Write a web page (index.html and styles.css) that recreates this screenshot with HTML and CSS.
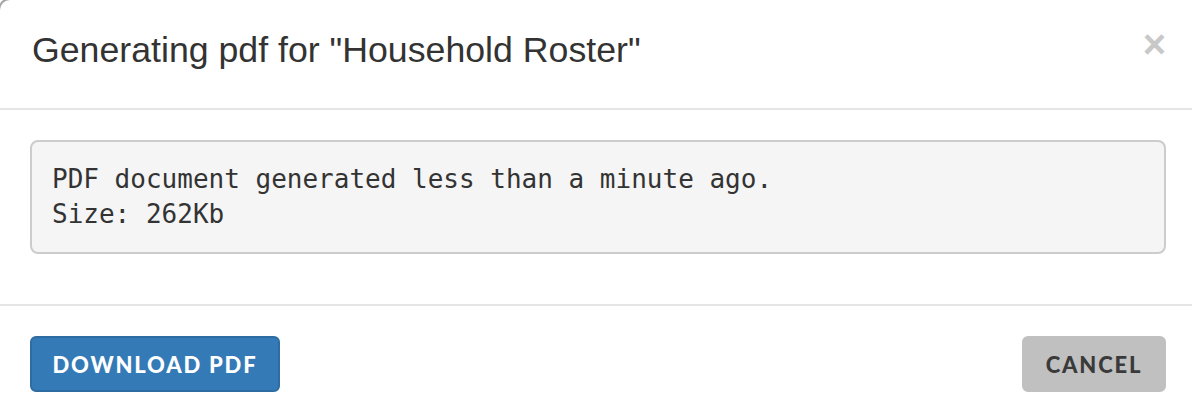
FILE: index.html
```html
<!DOCTYPE html>
<html>
<head>
<meta charset="utf-8">
<link rel="stylesheet" href="styles.css">
</head>
<body>
<div class="modal">
  <div class="modal-header">
    <h4 class="modal-title">Generating pdf for "Household Roster"</h4>
    <button class="close" type="button">×</button>
  </div>
  <div class="modal-body">
    <pre class="info">PDF document generated less than a minute ago.
Size: 262Kb</pre>
  </div>
  <div class="modal-footer">
    <button class="btn btn-primary" type="button">DOWNLOAD PDF</button>
    <button class="btn btn-cancel" type="button">CANCEL</button>
  </div>
</div>
</body>
</html>
```
FILE: styles.css
```css
html, body {
  margin: 0;
  padding: 0;
  background: #fff;
  overflow: hidden;
}
body {
  width: 1192px;
  height: 416px;
  font-family: "Liberation Sans", Arial, sans-serif;
  color: #333;
}
.modal {
  margin: -2px 0 0 -2px;
  width: 1194px;
  height: 418px;
  border: 2px solid rgba(0,0,0,0.35);
  border-right: 0;
  border-bottom: 0;
  border-radius: 12px 0 0 0;
  background: #fff;
  box-sizing: border-box;
  overflow: hidden;
}
.modal-header {
  width: 1192px;
  box-sizing: border-box;
  padding: 0 26px 0 32px;
  border-bottom: 2px solid #e5e5e5;
  display: flex;
  align-items: center;
  justify-content: space-between;
  height: 110px;
}
.modal-title {
  margin: 0 0 8px 0;
  font-size: 35.7px;
  font-weight: normal;
  line-height: 50px;
  color: #333;
}
.close {
  border: 0;
  background: none;
  padding: 0;
  font-family: "Liberation Sans", Arial, sans-serif;
  font-weight: bold;
  font-size: 40px;
  line-height: 1;
  color: #c8c8c8;
  margin-top: -20px;
}
.modal-body {
  width: 1192px;
  box-sizing: border-box;
  padding: 30px 26px 30px 30px;
}
.info {
  margin: 0 0 20px 0;
  padding: 20px 20px 16px 20px;
  background: #f5f5f5;
  border: 2px solid #ccc;
  border-radius: 8px;
  font-family: "DejaVu Sans Mono", monospace;
  font-size: 26px;
  line-height: 35px;
  color: #333;
  height: 114px;
  box-sizing: border-box;
}
.modal-footer {
  width: 1192px;
  box-sizing: border-box;
  border-top: 2px solid #e5e5e5;
  padding: 30px 26px 0 30px;
  display: flex;
  justify-content: space-between;
}
.btn {
  height: 56px;
  border-radius: 6px;
  font-family: Lato, "Liberation Sans", sans-serif;
  font-weight: 900;
  font-size: 22px;
  letter-spacing: 1.8px;
  padding: 0;
  white-space: nowrap;
  box-sizing: border-box;
}
.btn-primary {
  width: 250px;
  background: #337ab7;
  border: 2px solid #2e6da4;
  color: #fff;
}
.btn-cancel {
  width: 144px;
  background: #c0c0c0;
  border: 2px solid #c0c0c0;
  color: #3a3a3a;
}
```
